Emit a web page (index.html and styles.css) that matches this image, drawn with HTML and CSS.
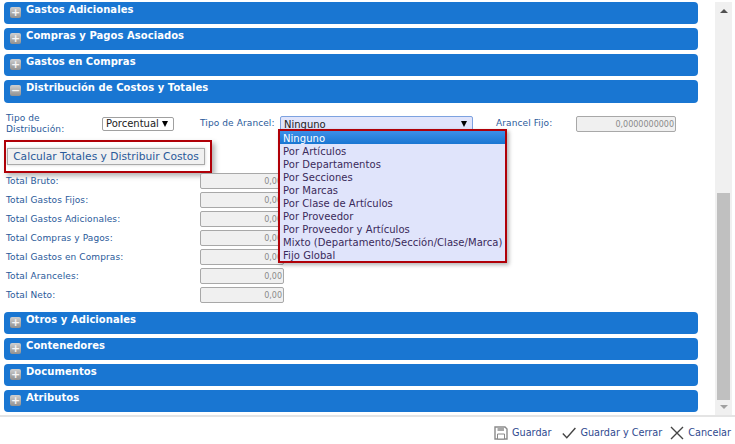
FILE: index.html
```html
<!DOCTYPE html>
<html lang="es">
<head>
<meta charset="utf-8">
<title>Distribución de Costos y Totales</title>
<link rel="stylesheet" href="styles.css">
</head>
<body>
<div class="window">
  <div class="content">
    <main class="panels">
      <section class="panel"><span class="toggle">+</span><h2>Gastos Adicionales</h2></section>
      <section class="panel"><span class="toggle">+</span><h2>Compras y Pagos Asociados</h2></section>
      <section class="panel"><span class="toggle">+</span><h2>Gastos en Compras</h2></section>
      <section class="panel panel-open"><span class="toggle">−</span><h2>Distribución de Costos y Totales</h2></section>

      <div class="body">
        <div class="options">
          <label class="lbl lbl-dist">Tipo de Distribución:</label>
          <div class="select select-dist"><span>Porcentual</span><i class="caret"></i></div>
          <label class="lbl lbl-aran">Tipo de Arancel:</label>
          <div class="select select-aran"><span>Ninguno</span><i class="caret"></i>
            <ul class="dropdown">
              <li class="selected">Ninguno</li>
              <li>Por Artículos</li>
              <li>Por Departamentos</li>
              <li>Por Secciones</li>
              <li>Por Marcas</li>
              <li>Por Clase de Artículos</li>
              <li>Por Proveedor</li>
              <li>Por Proveedor y Artículos</li>
              <li>Mixto (Departamento/Sección/Clase/Marca)</li>
              <li>Fijo Global</li>
            </ul>
          </div>
          <label class="lbl lbl-fijo">Arancel Fijo:</label>
          <div class="field field-wide">0,0000000000</div>
        </div>
        <div class="callout"><button class="calc">Calcular Totales y Distribuir Costos</button></div>
        <div class="totals">
          <div class="row"><label class="lbl">Total Bruto:</label><div class="field">0,00</div></div>
          <div class="row"><label class="lbl">Total Gastos Fijos:</label><div class="field">0,00</div></div>
          <div class="row"><label class="lbl">Total Gastos Adicionales:</label><div class="field">0,00</div></div>
          <div class="row"><label class="lbl">Total Compras y Pagos:</label><div class="field">0,00</div></div>
          <div class="row"><label class="lbl">Total Gastos en Compras:</label><div class="field">0,00</div></div>
          <div class="row"><label class="lbl">Total Aranceles:</label><div class="field">0,00</div></div>
          <div class="row"><label class="lbl">Total Neto:</label><div class="field">0,00</div></div>
        </div>
      </div>

      <section class="panel"><span class="toggle">+</span><h2>Otros y Adicionales</h2></section>
      <section class="panel"><span class="toggle">+</span><h2>Contenedores</h2></section>
      <section class="panel"><span class="toggle">+</span><h2>Documentos</h2></section>
      <section class="panel"><span class="toggle">+</span><h2>Atributos</h2></section>
    </main>
    <div class="scrollbar">
      <i class="arrow-up"></i>
      <div class="track"><div class="thumb"></div></div>
      <i class="arrow-down"></i>
    </div>
  </div>
  <footer class="actions">
    <a class="action action-save">
      <svg class="ico" width="14" height="14" viewBox="0 0 14 14"><path d="M1 1h10l2 2v10H1z" fill="#fff" stroke="#8a8a8a" stroke-width="1.4"/><path d="M3.5 1.5h6.5v3.5H3.5z" fill="#a8a8a8"/><path d="M3.5 8h7v5H3.5z" fill="#fff" stroke="#8a8a8a"/></svg>
      Guardar</a>
    <a class="action">
      <svg class="ico" width="14" height="12" viewBox="0 0 14 12"><path d="M.8 6.5l4 4.2L13.4 1" fill="none" stroke="#444" stroke-width="1.4"/></svg>
      Guardar y Cerrar</a>
    <a class="action">
      <svg class="ico" width="14" height="14" viewBox="0 0 14 14"><path d="M1 1l12 12M13 1L1 13" fill="none" stroke="#444" stroke-width="1.4"/></svg>
      Cancelar</a>
  </footer>
</div>
</body>
</html>
```
FILE: styles.css
```css
* { box-sizing: border-box; }
html, body { margin: 0; height: 100%; background: #fff; }
body { font: 10px/12px "DejaVu Sans", Verdana, sans-serif; color: #1c4587; overflow: hidden; }
.window { width: 735px; height: 444px; display: flex; flex-direction: column; }
.content { height: 417px; display: flex; border-bottom: 2px solid #e4e4e4; }
.panels { width: 694px; margin-left: 4px; padding-top: 2px; display: flex; flex-direction: column; }
.panel { height: 22px; margin-bottom: 4px; background: #1976d2; border-radius: 4px; display: flex; align-items: flex-start; padding-left: 6px; flex: none; position: relative; }
.panel-open { height: 23px; }
.panel h2 { margin: 0; font: bold 10px/12px "DejaVu Sans", Verdana, sans-serif; color: #fff; padding-top: 2px; letter-spacing: 0.05px; }
.toggle { width: 11px; height: 11px; margin: 5px 5px 0 0; border-radius: 2px; background: linear-gradient(#cfcfcf, #909090); color: #f4f4f4; font: bold 11px/11px "DejaVu Sans", sans-serif; text-align: center; flex: none; }
.body { height: 209px; margin-left: -4px; margin-top: -4px; position: relative; flex: none; }
.options { display: flex; align-items: flex-start; height: 37px; padding-top: 10px; position: relative; }
.lbl { color: #2a5a9a; font-size: 9px; letter-spacing: 0.1px; flex: none; white-space: nowrap; }
.lbl-dist { width: 96px; margin-left: 6px; line-height: 11px; white-space: normal; padding-right: 30px; }
.select { height: 14px; border: 1px solid #a0a0a0; border-radius: 2px; background: #fff; color: #222; display: flex; align-items: center; justify-content: space-between; padding: 0 5px 0 3px; position: relative; flex: none; }
.select-dist { width: 72px; margin-top: 4px; }
.lbl-aran { width: 80px; margin: 4px 0 0 26px; }
.select-aran { width: 193px; height: 15px; margin-top: 3px; background: #e0e4fb; border-color: #7da2e0; }
.select-aran span { padding-top: 2px; }
.lbl-fijo { margin: 4px 0 0 23px; width: 80px; }
.field { width: 84px; height: 16px; border: 1px solid #a8a8a8; border-radius: 2px; background: #f0f0f0; color: #8a8a8a; font-size: 8px; line-height: 16px; text-align: right; padding-right: 1px; flex: none; }
.field-wide { width: 100px; margin-top: 3px; }
.caret { width: 0; height: 0; border: 3px solid transparent; border-top: 6px solid #000; border-bottom: 0; }
.dropdown { position: absolute; z-index: 5; left: -3px; top: 12px; width: 229px; margin: 0; padding: 0; list-style: none; background: #e0e4fb; border: 2px solid #b00008; box-shadow: 2px 2px 4px rgba(0,0,0,.3); color: #3a2a5a; letter-spacing: 0.05px; }
.dropdown li { height: 13px; line-height: 13px; padding: 1px 0 0 3px; white-space: nowrap; }
.dropdown .selected { background: linear-gradient(#3d8fe8, #1976d2); color: #fff; }
.callout { width: 208px; height: 33px; margin-left: 4px; padding: 6px 0 0 1px; border: 2px solid #b00008; box-shadow: 3px 3px 5px rgba(0,0,0,.3); }
.calc { width: 198px; height: 17px; padding: 0; border: 1px solid #aaa; background: #f0f0f0; color: #2a5a9a; font: 10.7px/14px "DejaVu Sans", sans-serif; box-shadow: 0 0 3px rgba(0,0,0,.2); }
.totals { display: flex; flex-direction: column; gap: 3px; padding-left: 6px; }
.row { display: flex; align-items: center; height: 16px; }
.row .lbl { width: 194px; }
.scrollbar { width: 17px; margin: 2px 0 0 17px; background: #f0f0f0; display: flex; flex-direction: column; align-items: center; }
.arrow-up { width: 0; height: 0; margin-top: 7px; border: 4px solid transparent; border-bottom: 4px solid #505050; border-top: 0; }
.track { flex: 1; width: 13px; padding-top: 180px; }
.thumb { height: 207px; background: #c0c0c0; }
.arrow-down { width: 0; height: 0; margin-bottom: 6px; border: 4px solid transparent; border-top: 4px solid #a0a0a0; border-bottom: 0; }
.actions { display: flex; justify-content: flex-end; align-items: center; gap: 8px; height: 27px; padding: 4px 4px 0 0; color: #2f4a8f; font-size: 9.7px; }
.action { display: flex; align-items: center; gap: 4px; }
.action-save { margin-right: 3px; }
.ico { flex: none; }
```
